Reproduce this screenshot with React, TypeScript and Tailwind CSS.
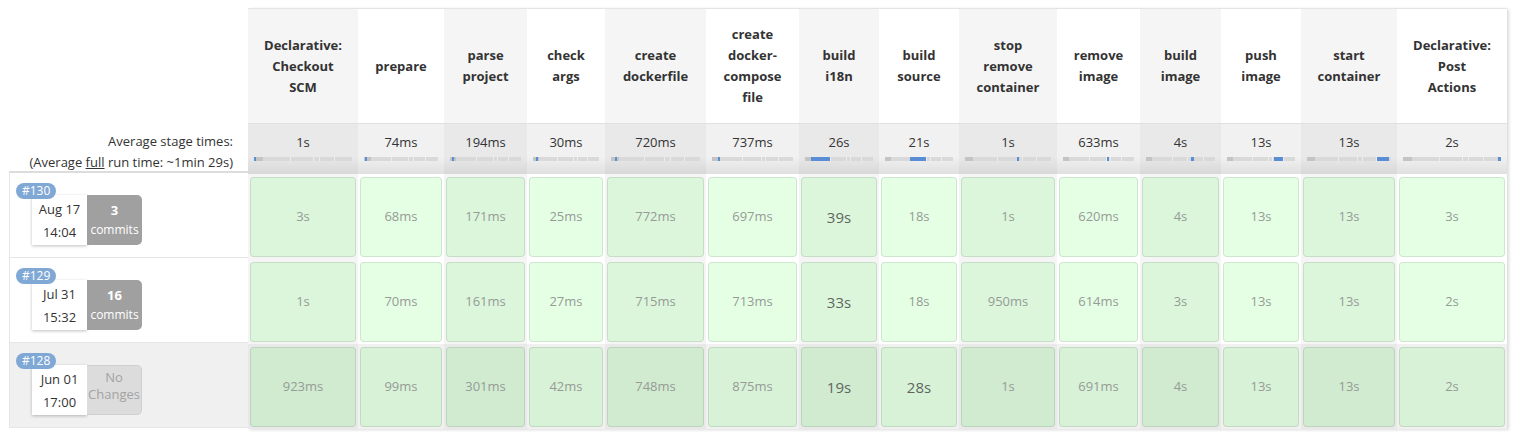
const stages = [
  { name: ['Declarative:', 'Checkout', 'SCM'], w: 'w-[110px]', avg: '1s', bar: [0, 0.8] },
  { name: ['prepare'], w: 'w-[86px]', avg: '74ms', bar: [1, 0.8] },
  { name: ['parse', 'project'], w: 'w-[83px]', avg: '194ms', bar: [3, 1] },
  { name: ['check', 'args'], w: 'w-[78px]', avg: '30ms', bar: [5, 1] },
  { name: ['create', 'dockerfile'], w: 'w-[101px]', avg: '720ms', bar: [4, 1] },
  { name: ['create', 'docker-', 'compose', 'file'], w: 'w-[93px]', avg: '737ms', bar: [7, 1] },
  { name: ['build', 'i18n'], w: 'w-[80px]', avg: '26s', bar: [9, 28] },
  { name: ['build', 'source'], w: 'w-[80px]', avg: '21s', bar: [37, 23] },
  { name: ['stop', 'remove', 'container'], w: 'w-[98px]', avg: '1s', bar: [61, 1] },
  { name: ['remove', 'image'], w: 'w-[83px]', avg: '633ms', bar: [62, 1] },
  { name: ['build', 'image'], w: 'w-[81px]', avg: '4s', bar: [65, 4] },
  { name: ['push', 'image'], w: 'w-[80px]', avg: '13s', bar: [69, 13] },
  { name: ['start', 'container'], w: 'w-[96px]', avg: '13s', bar: [83, 15] },
  { name: ['Declarative:', 'Post', 'Actions'], w: 'w-[110px]', avg: '2s', bar: [97, 3] },
];

const runs = [
  {
    id: '#130', date: 'Aug 17', time: '14:04', commits: '3', shaded: false, big: [6],
    times: ['3s', '68ms', '171ms', '25ms', '772ms', '697ms', '39s', '18s', '1s', '620ms', '4s', '13s', '13s', '3s'],
  },
  {
    id: '#129', date: 'Jul 31', time: '15:32', commits: '16', shaded: false, big: [6],
    times: ['1s', '70ms', '161ms', '27ms', '715ms', '713ms', '33s', '18s', '950ms', '614ms', '3s', '13s', '13s', '2s'],
  },
  {
    id: '#128', date: 'Jun 01', time: '17:00', commits: null, shaded: true, big: [6, 7],
    times: ['923ms', '99ms', '301ms', '42ms', '748ms', '875ms', '19s', '28s', '1s', '691ms', '4s', '13s', '13s', '2s'],
  },
];

// separators in the mini timeline bar
const ticks = [37, 60, 66, 82];

const Bar = ({ start, width }: { start: number; width: number }) => (
  <div className="relative mx-[6px] mt-[6px] h-[4px] bg-[#d9d9d9]">
    <div className="absolute left-0 top-0 h-full w-[9%] bg-[#c4c4c4]" />
    {ticks.map((t) => (
      <div key={t} className="absolute top-0 h-full w-px bg-[#ededed]" style={{ left: `${t}%` }} />
    ))}
    <div
      className="absolute top-0 h-full min-w-[2px] bg-[#5b8cd6]"
      style={{ left: `${start}%`, width: `${width}%` }}
    />
  </div>
);

const LeftColumn = () => (
  <div className="w-[248px] shrink-0">
    <div className="h-[114px]" />
    <div className="h-[51px] pl-[9px]">
      <div className="h-full border-b-2 border-[#dcdcdc] pr-[15px] pt-[9px] text-right leading-[21px]">
        <div>Average stage times:</div>
        <div>
          (Average <span className="underline">full</span> run time: ~1min 29s)
        </div>
      </div>
    </div>
    {runs.map((run) => (
      <div key={run.id} className="h-[85px] pl-[9px]">
        <div
          className={`relative h-full border-b border-l border-[#e6e6e6] pl-[22px] pt-[22px] ${
            run.shaded ? 'bg-[#f0f0f0]' : 'bg-white'
          }`}
        >
          <span className="absolute left-[6px] top-[10px] z-10 rounded-full bg-[#80a8d5] px-[6px] text-[12px] leading-[16px] text-white">
            {run.id}
          </span>
          <div className="flex">
            <div className="flex h-[50px] w-[55px] flex-col items-center justify-center gap-[3px] bg-white leading-[20px] shadow-[0_1px_3px_rgba(0,0,0,0.25)]">
              <span>{run.date}</span>
              <span>{run.time}</span>
            </div>
            {run.commits ? (
              <div className="flex h-[50px] w-[55px] flex-col items-center justify-center rounded-r-[5px] bg-[#a0a0a0] text-white">
                <span className="text-[13px] font-bold leading-[19px]">{run.commits}</span>
                <span className="text-[12px] leading-[19px]">commits</span>
              </div>
            ) : (
              <div className="flex h-[50px] w-[55px] flex-col items-center rounded-r-[5px] border border-l-0 border-[#cfcfcf] bg-[#dcdcdc] pt-[3px] text-[#a3a3a3]">
                <span className="leading-[17px]">No</span>
                <span className="leading-[17px]">Changes</span>
              </div>
            )}
          </div>
        </div>
      </div>
    ))}
  </div>
);

const StageTable = () => (
  <div className="w-[1259px] shrink-0 border-t border-[#e4e4e4] shadow-[2px_1px_3px_rgba(0,0,0,0.14)]">
    <div className="flex h-[114px]">
      {stages.map((s, i) => (
        <div
          key={i}
          className={`${s.w} flex shrink-0 flex-col items-center justify-center text-center font-bold leading-[21px] text-[#333] ${
            i % 2 === 0 ? 'bg-[#f5f5f5]' : 'bg-white'
          }`}
        >
          {s.name.map((l) => (
            <span key={l}>{l}</span>
          ))}
        </div>
      ))}
    </div>
    <div className="flex h-[51px]">
      {stages.map((s, i) => (
        <div
          key={i}
          className={`${s.w} shrink-0 border-t border-[#e0e0e0] bg-linear-to-b from-65% pt-[9px] ${
            i % 2 === 0 ? 'from-[#e9e9e9] to-[#d8d8d8]' : 'from-[#f1f1f1] to-[#e0e0e0]'
          }`}
        >
          <div className="text-center leading-[18px]">{s.avg}</div>
          <Bar start={s.bar[0]} width={s.bar[1]} />
        </div>
      ))}
    </div>
    {runs.map((run) => (
      <div key={run.id} className="flex h-[85px]">
        {stages.map((s, i) => {
          const colBg = run.shaded
            ? i % 2 === 0
              ? 'bg-[#e9e9e9]'
              : 'bg-[#f1f1f1]'
            : i % 2 === 0
              ? 'bg-[#f5f5f5]'
              : 'bg-white';
          const big = run.big.includes(i);
          return (
            <div key={i} className={`${s.w} shrink-0 px-[2px] pt-[3px] ${colBg}`}>
              <div
                className={`flex h-[80px] items-center justify-center rounded-[4px] border border-black/10 bg-[#00ff00]/10 ${
                  big ? 'text-[15px] text-[#5f665f]' : 'text-[13px] text-[#969b96]'
                }`}
              >
                {run.times[i]}
              </div>
            </div>
          );
        })}
      </div>
    ))}
  </div>
);

export default function App() {
  return (
    <div className="min-h-screen bg-white pt-2 font-['Open_Sans',sans-serif] text-[13px] text-[#333]">
      <div className="flex">
        <LeftColumn />
        <StageTable />
      </div>
    </div>
  );
}
